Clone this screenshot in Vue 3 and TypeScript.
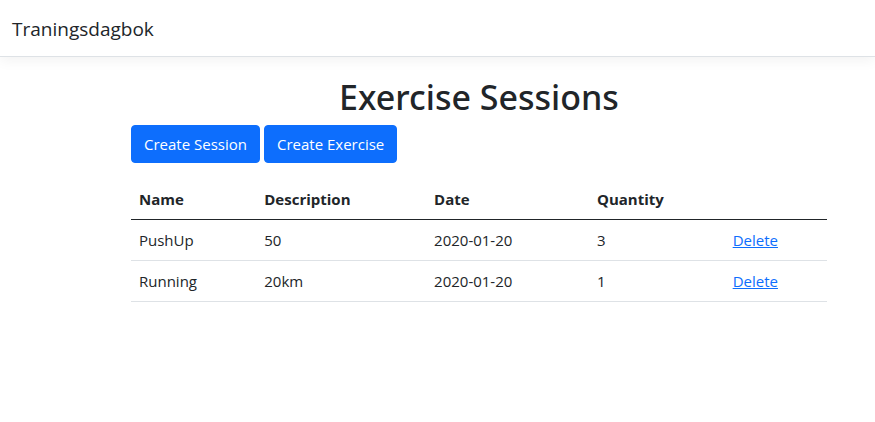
<script setup lang="ts">
interface Session {
  id: number
  name: string
  description: string
  date: string
  quantity: number
}

const sessions: Session[] = [
  { id: 1, name: 'PushUp', description: '50', date: '2020-01-20', quantity: 3 },
  { id: 2, name: 'Running', description: '20km', date: '2020-01-20', quantity: 1 },
]
</script>

<template>
  <header class="navbar">
    <a class="brand" href="#">Traningsdagbok</a>
  </header>
  <main class="container">
    <h1>Exercise Sessions</h1>
    <div class="actions">
      <button type="button" class="btn">Create Session</button>
      <button type="button" class="btn">Create Exercise</button>
    </div>
    <table>
      <colgroup>
        <col class="c-name" />
        <col class="c-description" />
        <col class="c-date" />
        <col class="c-quantity" />
        <col />
      </colgroup>
      <thead>
        <tr>
          <th>Name</th>
          <th>Description</th>
          <th>Date</th>
          <th>Quantity</th>
          <td></td>
        </tr>
      </thead>
      <tbody>
        <tr v-for="session in sessions" :key="session.id">
          <td>{{ session.name }}</td>
          <td>{{ session.description }}</td>
          <td>{{ session.date }}</td>
          <td>{{ session.quantity }}</td>
          <td><a href="#">Delete</a></td>
        </tr>
      </tbody>
    </table>
  </main>
</template>

<style>
body {
  margin: 0;
  background: #fff;
  color: #212529;
  font: 15px/24px 'Open Sans', 'Noto Sans', sans-serif;
}
</style>

<style scoped>
.navbar {
  padding: 14px 12px 12px;
  border-bottom: 1px solid #dee2e6;
  box-shadow: 0 4px 12px rgba(0, 0, 0, 0.05);
}
.brand {
  display: block;
  color: #212529;
  font-size: 19px;
  line-height: 30px;
  text-decoration: none;
}
.container {
  margin: 16px 48px 0 131px;
}
h1 {
  margin: 0 0 4px;
  font-family: 'Noto Sans', 'Open Sans', sans-serif;
  font-size: 34px;
  line-height: 48px;
  font-weight: 500;
  text-align: center;
}
.actions {
  display: flex;
  gap: 4px;
  margin-bottom: 16px;
}
.btn {
  padding: 6px 12px;
  border: 1px solid #0d6efd;
  border-radius: 4px;
  background: #0d6efd;
  color: #fff;
  font: inherit;
  white-space: nowrap;
}
table {
  width: 100%;
  border-collapse: collapse;
  table-layout: fixed;
}
.c-name {
  width: 18%;
}
.c-description {
  width: 24.4%;
}
.c-date {
  width: 23.4%;
}
.c-quantity {
  width: 19.5%;
}
th,
td {
  padding: 8px;
  border-bottom: 1px solid #dee2e6;
  text-align: left;
}
th {
  font-weight: 700;
}
thead th,
thead td {
  border-bottom-color: #212529;
}
td a {
  color: #0d6efd;
}
</style>
